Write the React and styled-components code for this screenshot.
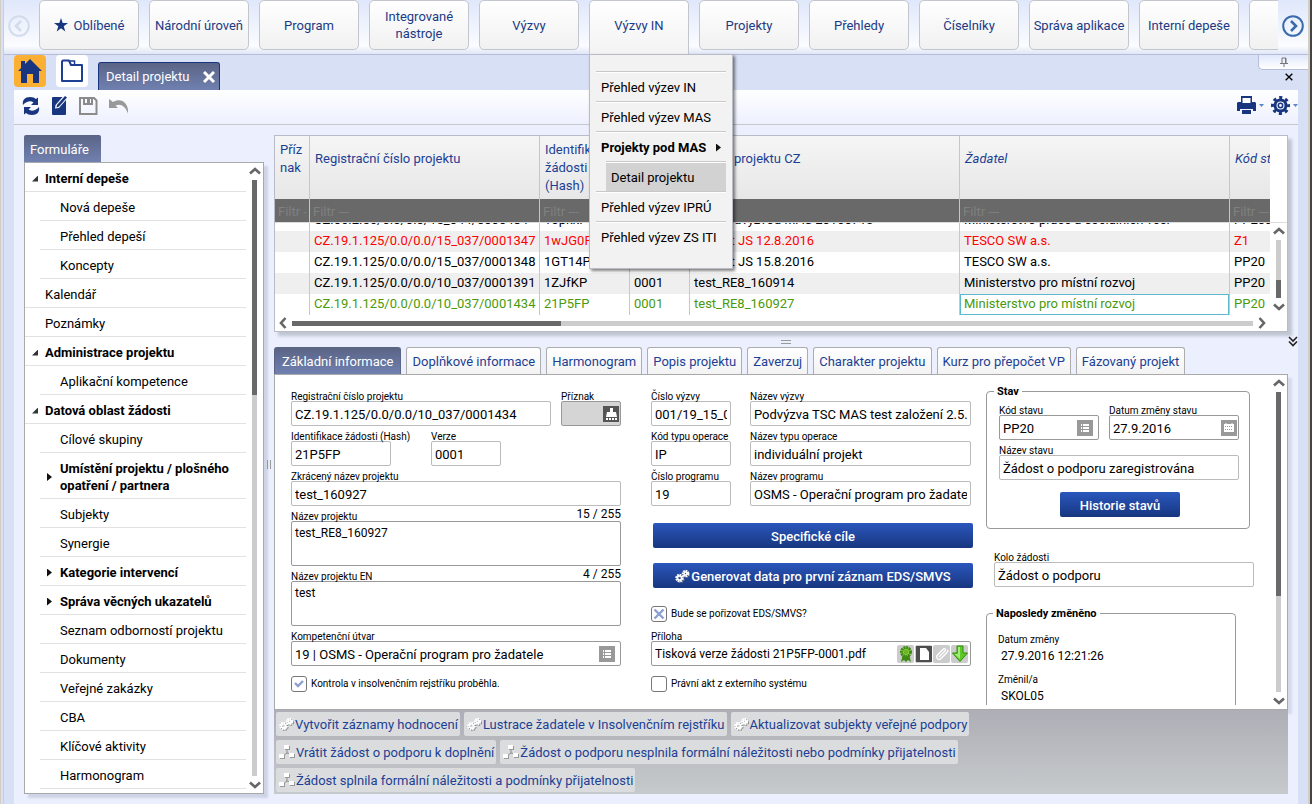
import React, { useId, useState } from "react";
import { styled, createGlobalStyle, css } from "styled-components";

const GlobalStyle = createGlobalStyle`
    *, *::before, *::after {
        box-sizing: border-box;
    }
    body {
        margin: 0;
        background: #d8e0f5;
        color: #000;
        font-family: Roboto, "Liberation Sans", sans-serif;
        font-size: 12px;
    }
    button, input, textarea, table {
        font: inherit;
        color: inherit;
    }
    button {
        border: 0;
        padding: 0;
        background: none;
        cursor: pointer;
    }
    a {
        color: inherit;
        text-decoration: none;
    }
    ul {
        margin: 0;
        padding: 0;
        list-style: none;
    }
`;

const NAV = ["Oblíbené", "Národní úroveň", "Program", "Integrované nástroje", "Výzvy", "Výzvy IN", "Projekty", "Přehledy", "Číselníky", "Správa aplikace", "Interní depeše", ""];

const MENU = [
    { text: "Přehled výzev IN" },
    { text: "Přehled výzev MAS" },
    { text: "Projekty pod MAS", bold: true },
    { text: "Detail projektu", nested: true },
    { text: "Přehled výzev IPRÚ" },
    { text: "Přehled výzev ZS ITI" },
];

const TREE = [
    { text: "Interní depeše", open: true },
    { text: "Nová depeše", level: 1 },
    { text: "Přehled depeší", level: 1 },
    { text: "Koncepty", level: 1 },
    { text: "Kalendář" },
    { text: "Poznámky" },
    { text: "Administrace projektu", open: true },
    { text: "Aplikační kompetence", level: 1 },
    { text: "Datová oblast žádosti", open: true },
    { text: "Cílové skupiny", level: 1 },
    { text: "Umístění projektu / plošného opatření / partnera", level: 1, closed: true },
    { text: "Subjekty", level: 1 },
    { text: "Synergie", level: 1 },
    { text: "Kategorie intervencí", level: 1, closed: true },
    { text: "Správa věcných ukazatelů", level: 1, closed: true },
    { text: "Seznam odborností projektu", level: 1 },
    { text: "Dokumenty", level: 1 },
    { text: "Veřejné zakázky", level: 1 },
    { text: "CBA", level: 1 },
    { text: "Klíčové aktivity", level: 1 },
    { text: "Harmonogram", level: 1 },
];

const COLUMNS = [
    { text: "Příz nak", width: 35, tall: true },
    { text: "Registrační číslo projektu", width: 230 },
    { text: "Identifikace žádosti (Hash)", width: 90, tall: true },
    { text: "Verze", width: 60 },
    { text: "Název projektu CZ", width: 270 },
    { text: "Žadatel", width: 270, italic: true },
    { text: "Kód stavu", width: 90, italic: true },
];

const ROWS = [
    { cells: ["", "CZ.06.2.56/0.0/0.0/15_044/0000484", "1opkkP", "0001", "test podvýzvou MAS 20160713", "Ministerstvo práce a sociálních věcí", "PP20a"] },
    { color: "#f00", cells: ["", "CZ.19.1.125/0.0/0.0/15_037/0001347", "1wJG0P", "0001", "Projekt JS 12.8.2016", "TESCO SW a.s.", "Z1"] },
    { cells: ["", "CZ.19.1.125/0.0/0.0/15_037/0001348", "1GT14P", "0001", "Projekt JS 15.8.2016", "TESCO SW a.s.", "PP20"] },
    { cells: ["", "CZ.19.1.125/0.0/0.0/10_037/0001391", "1ZJfKP", "0001", "test_RE8_160914", "Ministerstvo pro místní rozvoj", "PP20"] },
    { color: "#4a9a0a", cells: ["", "CZ.19.1.125/0.0/0.0/10_037/0001434", "21P5FP", "0001", "test_RE8_160927", "Ministerstvo pro místní rozvoj", "PP20"], selected: 5 },
];

const TABS = ["Základní informace", "Doplňkové informace", "Harmonogram", "Popis projektu", "Zaverzuj", "Charakter projektu", "Kurz pro přepočet VP", "Fázovaný projekt"];

const ACTIONS = [
    [
        { text: "Vytvořit záznamy hodnocení", gears: true },
        { text: "Lustrace žadatele v Insolvenčním rejstříku", gears: true },
        { text: "Aktualizovat subjekty veřejné podpory", gears: true },
    ],
    [{ text: "Vrátit žádost o podporu k doplnění" }, { text: "Žádost o podporu nesplnila formální náležitosti nebo podmínky přijatelnosti" }],
    [{ text: "Žádost splnila formální náležitosti a podmínky přijatelnosti" }],
];

/* icons */

const Chevron = ({ dir = "up", size = 12 }) => {
    const turn = { up: 0, right: 90, down: 180, left: 270 }[dir];
    return (
        <svg width={size} height={size} viewBox="0 0 12 12" fill="none" stroke="#666" strokeWidth="2.6">
            <path d="M1 8.500 6 4l5 4.500" transform={`rotate(${turn} 6 6)`} />
        </svg>
    );
};

const CircleArrow = ({ left }) => (
    <svg width="22" height="22" viewBox="0 0 22 22" fill="none" strokeWidth="2" stroke={left ? "#d3dcec" : "#3a6aad"}>
        <circle cx="11" cy="11" r="9.8" />
        <path d={left ? "M13 6 8 11l5 5" : "M9 6l5 5-5 5"} strokeWidth="2.6" />
    </svg>
);

const StarIcon = () => (
    <svg width="14" height="14" viewBox="0 0 14 14" fill="#17367f">
        <path d="M7 0l1.700 5H14L9.700 8.200 11.300 13.500 7 10.300 2.700 13.500 4.300 8.200 0 5h5.300z" />
    </svg>
);

const HomeIcon = () => (
    <svg width="26" height="26" viewBox="0 0 26 26" fill="#17367f">
        <path d="M13 1 1 13h3v12h6v-9h6v9h6V13h3L13 1z" />
        <path d="M4 3h4v6L4 12z" />
    </svg>
);

const FolderIcon = () => (
    <svg width="24" height="24" viewBox="0 0 24 24" fill="none" stroke="#1c3f94" strokeWidth="2">
        <path d="M3 1.500h6L11 6h11v16H2V2.500z" strokeLinejoin="round" />
        <path d="M9 2h5.500v4" strokeWidth="1.500" />
    </svg>
);

const RefreshIcon = () => (
    <svg width="18" height="20" viewBox="0 0 18 20" fill="#17367f">
        <path d="M1 9C0 4 3 1 8 1c3 0 4.500.7 6 2l2-1.500V9H9l2.500-2.500C9 4.500 4.500 5 1 9z" />
        <path d="M17 11c1 5-2 8-7 8-3 0-4.500-.7-6-2l-2 1.500V11h7l-2.500 2.500C9 15.500 13.500 15 17 11z" />
    </svg>
);

const EditIcon = () => (
    <svg width="16" height="20" viewBox="0 0 16 20">
        <path d="M2 1h9.500L4.500 9 4 12.500 8 12l7-8v14a1 1 0 0 1-1 1H2a1 1 0 0 1-1-1V2a1 1 0 0 1 1-1z" fill="#17367f" />
        <path d="M14 0l2 1.500-8 9-2.500 1L6 9z" fill="#17367f" />
    </svg>
);

const SaveIcon = () => (
    <svg width="20" height="20" viewBox="0 0 20 20" fill="none" stroke="#8b8b8b" strokeWidth="2">
        <path d="M2 2h14l2.500 2.500V18H2z" />
        <path d="M6 2v6h8V2" />
        <path d="M10.500 3v4" strokeWidth="3" />
    </svg>
);

const UndoIcon = () => (
    <svg width="20" height="16" viewBox="0 0 20 16" fill="#999">
        <path d="M0 1v9h9L6.500 7.500C12 5.500 16 8 19 15.500 20 6 13-1 4 4z" />
    </svg>
);

const PrintIcon = () => (
    <svg width="19" height="19" viewBox="0 0 19 19">
        <path d="M4 0h11v6H4zM1 6h17l1 1v8h-3v-2H3v2H0V7z" fill="#17367f" />
        <path d="M5.500 2h8v5h-8z" fill="#fff" />
        <path d="M5 14h9v4H5z" fill="#17367f" />
    </svg>
);

const GearIcon = () => (
    <svg width="19" height="19" viewBox="0 0 19 19" fill="none" stroke="#17367f">
        <circle cx="9.500" cy="9.500" r="5.500" strokeWidth="3" />
        <circle cx="9.500" cy="9.500" r="8" strokeWidth="3" strokeDasharray="3.140 3.140" strokeDashoffset="1.570" />
        <circle cx="9.500" cy="9.500" r="2.200" strokeWidth="1.500" />
    </svg>
);

const PinIcon = () => (
    <svg width="8" height="10" viewBox="0 0 8 10" fill="none" stroke="#777">
        <path d="M2 6V1h4v5M0 6.500h8M4 6.500V10M5.500 1v5" />
    </svg>
);

const CrossIcon = ({ color, size = 10, width = 3 }) => (
    <svg width={size} height={size} viewBox="0 0 12 12" stroke={color} strokeWidth={width}>
        <path d="M1 1l10 10M11 1 1 11" />
    </svg>
);

const TreeIcon = () => (
    <svg width="16" height="16" viewBox="0 0 16 16">
        <path d="M8 5v4L4 12M8 9l4 1" fill="none" stroke="#8b8b8b" />
        <g fill="#999">
            <path d="M6 2h5v4H6zM1 11h5v4H1zM11 10h5v4h-5z" />
        </g>
        <g fill="#fff">
            <path d="M5 1h5v4H5zM0 10h5v4H0zM10 9h5v4h-5z" />
        </g>
    </svg>
);

const GearsIcon = () => (
    <svg width="15" height="15" viewBox="0 0 15 15" fill="none">
        <g transform="translate(1 1)" stroke="#808080">
            <circle cx="4.500" cy="9" r="3" strokeWidth="2" strokeDasharray="1.500 .8" />
            <circle cx="10.500" cy="4.500" r="2.500" strokeWidth="2" strokeDasharray="1.500 .8" />
        </g>
        <g stroke="#fff">
            <circle cx="4.500" cy="9" r="3" strokeWidth="2.500" strokeDasharray="1.600 .7" />
            <circle cx="4.500" cy="9" r="2" strokeWidth="1.500" />
            <circle cx="10.500" cy="4.500" r="2.500" strokeWidth="2.500" strokeDasharray="1.600 .7" />
            <circle cx="10.500" cy="4.500" r="1.500" strokeWidth="1.500" />
        </g>
    </svg>
);

const ListIcon = () => (
    <svg width="16" height="16" viewBox="0 0 16 16">
        <path d="M0 0h16v16H0z" fill="#999" />
        <path d="M4 5h1M6 5h6M4 8h1M6 8h6M4 11h1M6 11h6" stroke="#fff" strokeWidth="1.800" />
    </svg>
);

const CalendarIcon = () => (
    <svg width="16" height="16" viewBox="0 0 16 16">
        <path d="M0 0h16v16H0z" fill="#999" />
        <path d="M3 4h10v8H3z" fill="#fff" />
        <path d="M4 6.500h8M4 9.500h8" stroke="#999" strokeDasharray="1 1" />
        <path d="M5 3v2M11 3v2" stroke="#fff" />
    </svg>
);

const StampIcon = () => (
    <svg width="16" height="16" viewBox="0 0 16 16">
        <path d="M0 0h16v16H0z" fill="#555" />
        <path d="M7 2h3v4h3l1 5H3l1-5h3zM3 12h2v2H3zM6 12h2v2H6zM9 12h2v2H9zM12 12h2v2h-2z" fill="#fff" />
    </svg>
);

const RosetteIcon = () => (
    <svg width="16" height="18" viewBox="0 0 16 18">
        <path d="M5 9 3 17l3-2 2 2 2-2 3 2-2-8z" fill="#3f8a12" />
        <circle cx="8" cy="7" r="4.500" fill="#8fd03f" stroke="#3f8a12" strokeWidth="3" strokeDasharray="2 .6" />
        <circle cx="8" cy="7" r="2.200" fill="#6ab526" />
    </svg>
);

const PageIcon = () => (
    <svg width="16" height="16" viewBox="0 0 16 16">
        <path d="M0 0h16v16H0z" fill="#4d4d4d" />
        <path d="M4 2h6l3 4v8H4z" fill="#fff" />
    </svg>
);

const ClipIcon = () => (
    <svg width="16" height="16" viewBox="0 0 16 16" fill="none" stroke="#fff" strokeWidth="1.400">
        <path d="M5 11l6-6c1.500-1.500-.5-3-1.800-1.700L3.500 9c-2.500 2.600 1.200 5.800 3.500 3.500l6-6c1-1 1-2 .5-2.700" />
    </svg>
);

const DownloadIcon = () => (
    <svg width="16" height="18" viewBox="0 0 16 18">
        <path d="M5 1h6v7h4.500L8 16.500.5 8H5z" fill="#5cc924" stroke="#2f8f0e" />
        <path d="M6 2h2v12L2.500 9H6z" fill="#a6eb7a" />
    </svg>
);

const DoubleChevron = () => (
    <svg width="10" height="11" viewBox="0 0 10 11" fill="none" stroke="#222" strokeWidth="1.600">
        <path d="M1 1l4 4 4-4M1 5.500l4 4 4-4" />
    </svg>
);

/* shared pieces */

const ScrollBar = ({ horizontal, start, size }) => (
    <Scroll $horizontal={horizontal}>
        <button type="button" aria-label="Zpět">
            <Chevron dir={horizontal ? "left" : "up"} />
        </button>
        <Track $horizontal={horizontal}>
            <span style={{ flexGrow: start }} />
            <Thumb style={{ flexGrow: size }} />
            <span style={{ flexGrow: 100 - start - size }} />
        </Track>
        <button type="button" aria-label="Vpřed">
            <Chevron dir={horizontal ? "right" : "down"} />
        </button>
    </Scroll>
);

const Field = ({ label, value, width, tone, icon, iconGap, rows, counter, plain }) => {
    const id = useId();
    return (
        <FieldBox>
            <FieldHead>
                <label htmlFor={id}>{label}</label>
                {counter && <Counter>{counter}</Counter>}
            </FieldHead>
            {rows ? (
                <Area id={id} defaultValue={value} />
            ) : (
                <InputBox $width={width} $tone={tone} $iconGap={iconGap}>
                    <input id={id} defaultValue={value} className={plain ? "plain" : undefined} />
                    {icon}
                </InputBox>
            )}
        </FieldBox>
    );
};

const Check = ({ label, state, top }) => (
    <CheckLabel $top={top}>
        <input type="checkbox" defaultChecked={state === "yes"} />
        <span>{label}</span>
        {state === "yes" && (
            <svg width="16" height="16" viewBox="0 0 16 16" fill="none" stroke="#8b9fd0" strokeWidth="2.400">
                <path d="M4 7l3 3 5-5" />
            </svg>
        )}
        {state === "no" && (
            <svg width="16" height="16" viewBox="0 0 16 16" fill="none" stroke="#8b9fd0" strokeWidth="2.400">
                <path d="M3.500 3.500l9 9M12.500 3.500l-9 9" />
            </svg>
        )}
    </CheckLabel>
);

/* page parts */

const TopNav = () => (
    <NavBar>
        <NavArrow type="button" aria-label="Předchozí" disabled>
            <CircleArrow left />
        </NavArrow>
        <NavList>
            {NAV.map((name, i) => (
                <NavItem key={name}>
                    <NavButton type="button" $open={name === "Výzvy IN"} aria-label={name || "Další"}>
                        {i === 0 && <StarIcon />}
                        {name}
                    </NavButton>
                    {name === "Výzvy IN" && (
                        <Menu>
                            {MENU.map((item) => (
                                <MenuItem key={item.text} $nested={item.nested} $bold={item.bold}>
                                    <a href="#menu">{item.text}</a>
                                    {item.bold && <Triangle />}
                                </MenuItem>
                            ))}
                        </Menu>
                    )}
                </NavItem>
            ))}
        </NavList>
        <NavArrow type="button" aria-label="Následující">
            <CircleArrow />
        </NavArrow>
    </NavBar>
);

const PageTabs = () => (
    <PageTabBar>
        <SquareButton type="button" $bg="#fbb034" aria-label="Domů">
            <HomeIcon />
        </SquareButton>
        <SquareButton type="button" $bg="#fff" aria-label="Složka">
            <FolderIcon />
        </SquareButton>
        <OpenTab>
            <span>Detail projektu</span>
            <button type="button" aria-label="Zavřít záložku">
                <CrossIcon color="#fff" size={12} />
            </button>
        </OpenTab>
        <PinArea>
            <PinFlap type="button" aria-label="Připnout">
                <PinIcon />
            </PinFlap>
            <CloseAll type="button" aria-label="Zavřít">
                <CrossIcon color="#000" size={8} width={2} />
            </CloseAll>
        </PinArea>
    </PageTabBar>
);

const Sidebar = () => (
    <Aside>
        <PanelTab>Formuláře</PanelTab>
        <SidePanel>
            <TreeList>
                {TREE.map((item) => (
                    <TreeRow key={item.text} $level={item.level} $bold={item.open || item.closed}>
                        {item.open && <Corner />}
                        {item.closed && <Triangle />}
                        <a href="#form">{item.text}</a>
                    </TreeRow>
                ))}
            </TreeList>
            <ScrollBar start={0} size={36} />
        </SidePanel>
    </Aside>
);

const ColGroup = () => (
    <colgroup>
        {COLUMNS.map((c) => (
            <col key={c.text} style={{ width: c.width }} />
        ))}
    </colgroup>
);

const ProjectGrid = () => (
    <GridPanel>
        <GridClip>
            <Table>
                <ColGroup />
                <thead>
                    <tr>
                        {COLUMNS.map((c) => (
                            <HeadCell key={c.text} $tall={c.tall} $italic={c.italic}>
                                {c.text}
                            </HeadCell>
                        ))}
                    </tr>
                    <tr>
                        {COLUMNS.map((c) => (
                            <FilterCell key={c.text}>
                                <input placeholder="Filtr ---" aria-label={`Filtr ${c.text}`} />
                            </FilterCell>
                        ))}
                    </tr>
                </thead>
            </Table>
        </GridClip>
        <GridBody>
            <RowsClip>
                <Table>
                    <ColGroup />
                    <tbody>
                        {ROWS.map((row) => (
                            <BodyRow key={row.cells[1]} $color={row.color}>
                                {row.cells.map((cell, i) => (
                                    <BodyCell key={COLUMNS[i].text} $selected={row.selected === i}>
                                        {cell}
                                    </BodyCell>
                                ))}
                            </BodyRow>
                        ))}
                    </tbody>
                </Table>
            </RowsClip>
            <ScrollBar start={69} size={31} />
        </GridBody>
        <GridFoot>
            <ScrollBar horizontal start={0} size={28} />
        </GridFoot>
    </GridPanel>
);

const DetailForm = () => (
    <FormPanel>
        <FormClip>
            <FormColumns>
                <div>
                    <FieldRow $cols="260px 60px" $gap={10}>
                        <Field label="Registrační číslo projektu" value="CZ.19.1.125/0.0/0.0/10_037/0001434" />
                        <Field label="Příznak" tone="filled" icon={<StampIcon />} iconGap={1} />
                    </FieldRow>
                    <FieldRow $cols="140px 70px">
                        <Field label="Identifikace žádosti (Hash)" value="21P5FP" width={100} />
                        <Field label="Verze" value="0001" />
                    </FieldRow>
                    <Field label="Zkrácený název projektu" value="test_160927" />
                    <Field label="Název projektu" value="test_RE8_160927" rows={2} counter="15 / 255" />
                    <Field label="Název projektu EN" value="test" rows={2} counter="4 / 255" />
                    <Field label="Kompetenční útvar" value="19 | OSMS - Operační program pro žadatele" tone="dark" icon={<ListIcon />} iconGap={5} />
                    <Check label="Kontrola v insolvenčním rejstříku proběhla." state="yes" top={10} />
                </div>
                <div>
                    <FieldRow $cols="80px 1fr" $gap={19}>
                        <Field label="Číslo výzvy" value="001/19_15_037" />
                        <Field label="Název výzvy" value="Podvýzva TSC MAS test založení 2.5.2016" />
                        <Field label="Kód typu operace" value="IP" />
                        <Field label="Název typu operace" value="individuální projekt" />
                        <Field label="Číslo programu" value="19" />
                        <Field label="Název programu" value="OSMS - Operační program pro žadatele" />
                    </FieldRow>
                    <ButtonStack>
                        <BlueButton type="button">Specifické cíle</BlueButton>
                        <BlueButton type="button">
                            <GearsIcon />
                            Generovat data pro první záznam EDS/SMVS
                        </BlueButton>
                    </ButtonStack>
                    <Check label="Bude se pořizovat EDS/SMVS?" state="no" top={18} />
                    <Spacer />
                    <Field
                        label="Příloha"
                        value="Tisková verze žádosti 21P5FP-0001.pdf"
                        tone="dark"
                        plain
                        icon={
                            <FileTools>
                                <button type="button" aria-label="Podpis">
                                    <RosetteIcon />
                                </button>
                                <button type="button" aria-label="Soubor">
                                    <PageIcon />
                                </button>
                                <button type="button" aria-label="Připojit">
                                    <ClipIcon />
                                </button>
                                <button type="button" aria-label="Stáhnout">
                                    <DownloadIcon />
                                </button>
                            </FileTools>
                        }
                    />
                    <Check label="Právní akt z externího systému" top={10} />
                </div>
                <SideColumn>
                    <Group $width={264}>
                        <legend>Stav</legend>
                        <FieldRow $cols="100px 130px" $gap={10}>
                            <Field label="Kód stavu" value="PP20" tone="dark" icon={<ListIcon />} iconGap={5} />
                            <Field label="Datum změny stavu" value="27.9.2016" tone="dark" icon={<CalendarIcon />} iconGap={1} />
                        </FieldRow>
                        <Field label="Název stavu" value="Žádost o podporu zaregistrována" />
                        <BlueButton type="button" $small>
                            Historie stavů
                        </BlueButton>
                    </Group>
                    <RoundField>
                        <Field label="Kolo žádosti" value="Žádost o podporu" />
                    </RoundField>
                    <Group $width={250} $info>
                        <legend>Naposledy změněno</legend>
                        <dl>
                            <dt>Datum změny</dt>
                            <dd>27.9.2016 12:21:26</dd>
                            <dt>Změnil/a</dt>
                            <dd>SKOL05</dd>
                        </dl>
                    </Group>
                </SideColumn>
            </FormColumns>
        </FormClip>
        <ScrollBar start={0} size={68} />
    </FormPanel>
);

const App = () => {
    const [tab, setTab] = useState(TABS[0]);

    return (
        <>
            <GlobalStyle />
            <Window>
                <TopNav />
                <PageTabs />
                <Workspace>
                    <Toolbar>
                        <button type="button" aria-label="Obnovit">
                            <RefreshIcon />
                        </button>
                        <button type="button" aria-label="Upravit">
                            <EditIcon />
                        </button>
                        <button type="button" aria-label="Uložit">
                            <SaveIcon />
                        </button>
                        <button type="button" aria-label="Vrátit">
                            <UndoIcon />
                        </button>
                        <ToolbarEnd>
                            <button type="button" aria-label="Tisk">
                                <PrintIcon />
                                <Caret />
                            </button>
                            <button type="button" aria-label="Nastavení">
                                <GearIcon />
                                <Caret />
                            </button>
                        </ToolbarEnd>
                    </Toolbar>
                    <Body>
                        <Sidebar />
                        <SplitterV />
                        <Main>
                            <ProjectGrid />
                            <SplitterH>
                                <span />
                                <button type="button" aria-label="Sbalit">
                                    <DoubleChevron />
                                </button>
                            </SplitterH>
                            <TabRow>
                                {TABS.map((name) => (
                                    <Tab key={name} type="button" $active={name === tab} onClick={() => setTab(name)}>
                                        {name}
                                    </Tab>
                                ))}
                            </TabRow>
                            <DetailForm />
                            <ActionBar>
                                {ACTIONS.map((row) => (
                                    <ActionRow key={row[0].text}>
                                        {row.map((action) => (
                                            <ActionButton key={action.text} type="button">
                                                {action.gears ? <GearsIcon /> : <TreeIcon />}
                                                {action.text}
                                            </ActionButton>
                                        ))}
                                    </ActionRow>
                                ))}
                            </ActionBar>
                        </Main>
                    </Body>
                </Workspace>
            </Window>
        </>
    );
};

const Window = styled.div`
    display: flex;
    flex-direction: column;
    height: 100vh;
    overflow: hidden;
    background: #d8e0f5;
    border-left: 4px double #d4cdc4;
    border-right: 2px solid #444;
    box-shadow: inset -2px 0 0 #d4cdc4;
    padding-right: 2px;
`;

const NavBar = styled.nav`
    position: relative;
    z-index: 5;
    display: flex;
    height: 55px;
    flex: none;
    border-bottom: 1px solid #b5bdd8;
    background: linear-gradient(to bottom, #dfe7fb 0%, #fbfcff 85%, #e0e6f6 100%);
`;

const NavArrow = styled.button`
    display: flex;
    align-items: center;
    justify-content: center;
    width: 30px;
    height: 52px;
    flex: none;
`;

const NavList = styled.ul`
    display: flex;
    flex: 1;
    gap: 10px;
    min-width: 0;
    padding-left: 5px;
    overflow-x: clip;
`;

const NavItem = styled.li`
    position: relative;
    flex: none;
    width: 100px;
`;

const NavButton = styled.button`
    display: flex;
    align-items: center;
    justify-content: center;
    gap: 6px;
    width: 100%;
    height: 50px;
    border: 1px solid #c3c6cc;
    border-radius: 5px;
    background: linear-gradient(to bottom, #fff, #f1f1f1);
    color: #1c3a85;
    line-height: 17px;
    font-size: 13px;
    ${({ $open }) =>
        $open &&
        css`
            height: 54px;
            padding-bottom: 4px;
            border-bottom: 0;
            border-radius: 5px 5px 0 0;
            background: linear-gradient(to bottom, #fff, #f3f3f3);
        `}
`;

const Menu = styled.ul`
    position: absolute;
    top: 54px;
    left: 0;
    width: 144px;
    padding: 16px 6px 17px;
    border: 1px solid #b9bcc6;
    background: #f2f2f2;
    box-shadow: 2px 2px 3px rgba(0, 0, 0, 0.5);
    color: #000;
    font-size: 13px;
`;

const MenuItem = styled.li`
    display: flex;
    align-items: center;
    justify-content: space-between;
    height: 30px;
    padding: 2px 5px 0;
    border-top: 1px solid #c8c8c8;
    box-shadow: inset 0 1px 0 #fff;
    white-space: nowrap;
    font-weight: ${({ $bold }) => ($bold ? 700 : 400)};
    ${({ $nested }) =>
        $nested &&
        css`
            margin-left: 10px;
            background: #d2d2d2;
        `}
`;

const Triangle = styled.span`
    flex: none;
    width: 5px;
    height: 8px;
    background: #111;
    clip-path: polygon(0 0, 100% 50%, 0 100%);
`;

const Corner = styled.span`
    flex: none;
    width: 6px;
    height: 6px;
    background: #333;
    clip-path: polygon(100% 0, 100% 100%, 0 100%);
`;

const PageTabBar = styled.div`
    display: flex;
    flex: none;
    align-items: flex-start;
    height: 35px;
    padding-left: 10px;
    gap: 10px;
`;

const SquareButton = styled.button`
    display: flex;
    align-items: center;
    justify-content: center;
    width: 32px;
    height: 32px;
    border-radius: 4px;
    background: ${({ $bg }) => $bg};
`;

const OpenTab = styled.div`
    display: flex;
    align-items: center;
    align-self: flex-end;
    justify-content: space-between;
    width: 122px;
    height: 28px;
    padding: 0 4px 0 7px;
    border: 1px solid #17367f;
    border-bottom: 0;
    border-radius: 3px 3px 0 0;
    background: linear-gradient(to bottom, #5a6485, #7080b0);
    color: #fff;
    font-size: 13px;
    button {
        display: flex;
    }
`;

const PinArea = styled.div`
    display: flex;
    flex-direction: column;
    align-items: flex-end;
    width: 50px;
    margin-left: auto;
`;

const PinFlap = styled.button`
    display: flex;
    align-items: center;
    justify-content: center;
    width: 50px;
    height: 15px;
    border: 1px solid #b5bdd8;
    border-width: 0 0 1px 1px;
    border-radius: 0 0 0 5px;
    background: linear-gradient(to bottom, #e0e8fb, #fff);
`;

const CloseAll = styled.button`
    display: flex;
    padding: 3px 15px 0 0;
`;

const Workspace = styled.div`
    display: flex;
    flex: 1;
    flex-direction: column;
    min-height: 0;
    margin: 0 10px;
    background: #eceffe;
`;

const Toolbar = styled.div`
    display: flex;
    align-items: center;
    gap: 11px;
    height: 35px;
    flex: none;
    padding: 0 0 3px 8px;
    border-bottom: 1px solid #c8c8c8;
    background: linear-gradient(to bottom, #fff, #edf0ff);
    color: #17367f;
    button {
        display: flex;
        align-items: center;
    }
`;

const ToolbarEnd = styled.div`
    display: flex;
    gap: 7px;
    margin-left: auto;
`;

const Caret = styled.span`
    width: 5px;
    height: 3px;
    margin-left: 3px;
    background: #5a86c4;
    clip-path: polygon(0 0, 100% 0, 50% 100%);
`;

const Body = styled.div`
    display: flex;
    flex: 1;
    min-height: 0;
    padding: 10px;
`;

const Aside = styled.aside`
    display: flex;
    flex-direction: column;
    width: 240px;
    flex: none;
`;

const PanelTab = styled.h2`
    align-self: flex-start;
    width: 77px;
    height: 27px;
    margin: 0;
    padding-left: 6px;
    border-radius: 2px 2px 0 0;
    background: linear-gradient(to bottom, #5a6485, #7080b0);
    color: #fff;
    font-size: 13px;
    font-weight: 400;
    line-height: 29px;
`;

const SidePanel = styled.div`
    display: flex;
    flex: 1;
    min-height: 0;
    border: 1px solid #a9a9a9;
    background: #fff;
    box-shadow: 4px 4px 2px rgba(90, 100, 130, 0.2);
`;

const TreeList = styled.ul`
    flex: 1;
    overflow: hidden;
`;

const TreeRow = styled.li`
    position: relative;
    display: flex;
    align-items: center;
    min-height: 29px;
    padding: 7px 0 4px 20px;
    margin-left: ${({ $level }) => ($level ? 15 : 0)}px;
    border-bottom: 1px solid #e2e2e2;
    font-size: 13px;
    font-weight: ${({ $bold }) => ($bold ? 700 : 400)};
    line-height: 17px;
    ${Corner}, ${Triangle} {
        position: absolute;
        left: 7px;
    }
`;

const Scroll = styled.div`
    display: flex;
    flex: none;
    align-items: center;
    flex-direction: ${({ $horizontal }) => ($horizontal ? "row" : "column")};
    gap: 3px;
    padding: ${({ $horizontal }) => ($horizontal ? "0 2px" : "2px 0")};
    width: ${({ $horizontal }) => ($horizontal ? "100%" : "17px")};
    button {
        display: flex;
    }
`;

const Track = styled.div`
    display: flex;
    flex: 1;
    flex-direction: ${({ $horizontal }) => ($horizontal ? "row" : "column")};
    ${({ $horizontal }) => ($horizontal ? "height: 5px;" : "width: 5px;")}
    background: #ccc;
`;

const Thumb = styled.div`
    background: #696969;
`;

const SplitterV = styled.div`
    width: 10px;
    flex: none;
    display: flex;
    align-items: center;
    &::after {
        content: "";
        width: 4px;
        height: 9px;
        margin-left: 3px;
        border: 1px solid #999;
        border-width: 0 1px;
    }
`;

const Main = styled.main`
    display: flex;
    flex: 1;
    flex-direction: column;
    min-width: 0;
`;

const GridPanel = styled.section`
    flex: none;
    border: 1px solid #b9bcc6;
    background: #fff;
    box-shadow: 4px 4px 3px rgba(90, 100, 110, 0.3);
`;

const GridClip = styled.div`
    margin-right: 17px;
    overflow: hidden;
`;

const Table = styled.table`
    width: 1045px;
    table-layout: fixed;
    border-spacing: 0;
    font-size: 13px;
`;

const HeadCell = styled.th`
    height: 63px;
    padding: ${({ $tall }) => ($tall ? 5 : 14)}px 4px 0 5px;
    border-right: 1px solid #c3c6cc;
    background: linear-gradient(to bottom, #f5f5f5, #e7e7e7);
    color: #1c3f94;
    font-weight: 400;
    font-style: ${({ $italic }) => ($italic ? "italic" : "normal")};
    line-height: 18px;
    text-align: left;
    vertical-align: top;
    overflow: hidden;
`;

const FilterCell = styled.td`
    height: 23px;
    padding: 0;
    border-right: 1px solid #c3c6cc;
    background: #696969;
    input {
        display: block;
        width: 100%;
        height: 22px;
        padding: 2px 3px 0;
        border: 0;
        outline: 0;
        background: none;
        color: #fff;
        &::placeholder {
            color: #808080;
            opacity: 1;
        }
    }
`;

const GridBody = styled.div`
    display: flex;
    border-top: 1px solid #ddd;
`;

const RowsClip = styled.div`
    display: flex;
    flex: 1;
    flex-direction: column;
    justify-content: flex-end;
    height: 92px;
    overflow: hidden;
`;

const BodyRow = styled.tr`
    color: ${({ $color }) => $color || "#000"};
    &:nth-child(even) {
        background: #efefef;
    }
`;

const BodyCell = styled.td`
    height: 21px;
    padding: 0 4px 2px;
    border-right: 1px solid #c8c8c8;
    line-height: 19px;
    white-space: nowrap;
    overflow: hidden;
    ${({ $selected }) => $selected && "box-shadow: inset 0 0 0 1px #5cb8cc;"}
`;

const GridFoot = styled.div`
    display: flex;
    height: 16px;
    margin-right: 17px;
`;

const SplitterH = styled.div`
    display: flex;
    flex: none;
    align-items: center;
    height: 15px;
    margin-right: -10px;
    padding-top: 4px;
    span {
        width: 10px;
        height: 4px;
        margin: 0 auto;
        border: 1px solid #999;
        border-width: 1px 0;
    }
    button {
        display: flex;
        margin-left: -10px;
    }
`;

const TabRow = styled.div`
    display: flex;
    flex: none;
    gap: 5px;
`;

const Tab = styled.button`
    height: 27px;
    padding: 1px 5px 0;
    border: 1px solid #adadad;
    border-bottom: 0;
    border-radius: 3px 3px 0 0;
    background: linear-gradient(to bottom, #fff, #f3f3f3);
    color: #1c3f94;
    font-size: 13px;
    white-space: nowrap;
    ${({ $active }) =>
        $active &&
        css`
            padding: 1px 7px 0;
            border-color: #5a6485;
            background: linear-gradient(to bottom, #5a6485, #7080b0);
            color: #fff;
        `}
`;

const FormPanel = styled.section`
    display: flex;
    flex: 1;
    min-height: 0;
    border: 1px solid #a9a9a9;
    background: #fff;
    box-shadow: 4px 4px 2px rgba(90, 100, 130, 0.15);
`;

const FormClip = styled.div`
    flex: 1;
    min-width: 0;
    margin-bottom: 4px;
    overflow: hidden;
`;

const FormColumns = styled.div`
    display: grid;
    grid-template-columns: 330px 320px 268px;
    column-gap: 30px;
    padding: 11px 0 0 16px;
`;

const FieldRow = styled.div`
    display: grid;
    grid-template-columns: ${({ $cols }) => $cols};
    column-gap: ${({ $gap = 0 }) => $gap}px;
`;

const FieldBox = styled.div`
    min-width: 0;
`;

const FieldHead = styled.div`
    display: flex;
    align-items: flex-end;
    justify-content: space-between;
    height: 15px;
    font-size: 10px;
    line-height: 9px;
    white-space: nowrap;
`;

const Counter = styled.span`
    font-size: 12px;
    line-height: 14px;
`;

const InputBox = styled.div`
    display: flex;
    align-items: center;
    width: ${({ $width }) => ($width ? `${$width}px` : "100%")};
    height: 25px;
    padding: 0 ${({ $iconGap = 3 }) => $iconGap}px 0 3px;
    border: 1px solid ${({ $tone }) => ($tone ? "#999" : "#bbb")};
    border-radius: 2px;
    background: ${({ $tone }) => ($tone === "filled" ? "#d5d5d5" : "#fff")};
    svg {
        flex: none;
    }
    input {
        flex: 1;
        width: 0;
        min-width: 0;
        height: 23px;
        padding: 1px 0 0;
        border: 0;
        outline: 0;
        background: none;
        font-size: 13px;
    }
    .plain {
        font-size: 12px;
    }
`;

const Area = styled.textarea`
    display: block;
    width: 100%;
    height: 45px;
    padding: 4px 3px;
    border: 1px solid #999;
    border-radius: 2px;
    outline: 0;
    font-size: 12px;
    line-height: 15px;
    resize: none;
`;

const CheckLabel = styled.label`
    position: relative;
    display: flex;
    align-items: center;
    gap: 4px;
    margin-top: ${({ $top }) => $top}px;
    font-size: 10px;
    line-height: 16px;
    input {
        width: 16px;
        height: 16px;
        margin: 0;
        appearance: none;
        border: 1px solid #777;
        border-radius: 3px;
        background: #fff;
    }
    svg {
        position: absolute;
        top: 0;
        left: 0;
    }
`;

const Spacer = styled.div`
    height: 4px;
`;

const ButtonStack = styled.div`
    display: grid;
    row-gap: 15px;
    margin: 17px -2px 0 2px;
`;

const BlueButton = styled.button`
    display: flex;
    align-items: center;
    justify-content: center;
    gap: 1px;
    height: 25px;
    padding-top: 1px;
    border-radius: 2px;
    background: linear-gradient(to bottom, #2a57bd, #17367f);
    color: #fff;
    font-size: 13px;
    font-weight: 500;
    ${({ $small }) =>
        $small &&
        css`
            width: 120px;
            margin: 12px auto 0;
        `}
`;

const FileTools = styled.span`
    display: flex;
    gap: 1px;
    margin-right: -1px;
    button {
        display: flex;
        align-items: center;
        justify-content: center;
        width: 17px;
        height: 18px;
        border-radius: 2px;
        background: #ccc;
    }
`;

const SideColumn = styled.div`
    margin-left: -15px;
`;

const Group = styled.fieldset`
    width: ${({ $width }) => $width}px;
    min-width: 0;
    margin: 0;
    padding: ${({ $info }) => ($info ? "5px 11px 40px" : "3px 8px 11px 12px")};
    border: 1px solid #999;
    border-radius: 4px;
    legend {
        margin-left: -5px;
        padding: 0 3px;
        font-size: 11px;
        font-weight: 700;
        line-height: 11px;
    }
    dl {
        margin: 0;
        font-size: 10px;
    }
    dt {
        line-height: 16px;
        margin-top: 8px;
    }
    dd {
        margin: 0 0 0 3px;
        font-size: 12px;
        line-height: 16px;
    }
    > div:not(:first-of-type) {
        width: 240px;
    }
`;

const RoundField = styled.div`
    width: 260px;
    margin: 18px 0 21px 8px;
`;

const ActionBar = styled.div`
    display: grid;
    flex: none;
    row-gap: 4px;
    padding: 2px;
    background: linear-gradient(to bottom, #aeaeb6, #c6cacc);
`;

const ActionRow = styled.div`
    display: flex;
    gap: 4px;
`;

const ActionButton = styled.button`
    display: flex;
    align-items: center;
    gap: 1px;
    height: 24px;
    padding: 0 2px 0 3px;
    border-radius: 2px;
    background: #dbdcde;
    color: #1c3f94;
    font-size: 13px;
    white-space: nowrap;
`;

export default App;
